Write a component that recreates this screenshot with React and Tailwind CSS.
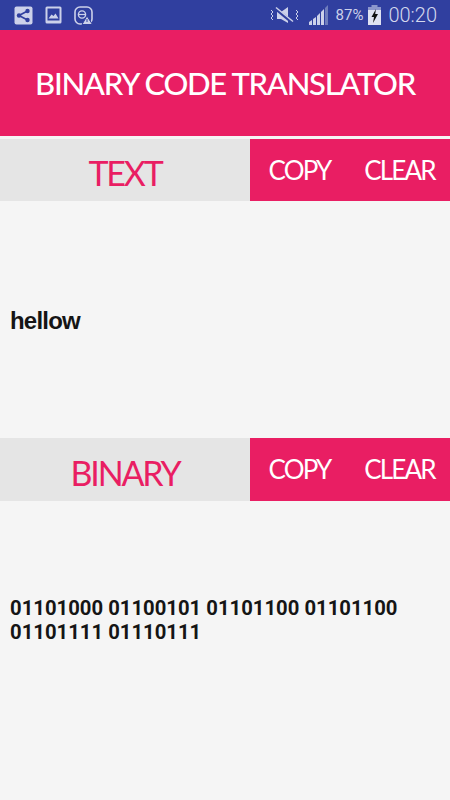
import React from 'react';

function ShareIcon() {
  return (
    <svg width="19" height="19" viewBox="0 0 19 19">
      <rect x="0.5" y="0.5" width="18" height="18" rx="2" fill="#ccd1ea" />
      <g stroke="#303f9f" strokeWidth="1.5">
        <line x1="5" y1="9.5" x2="13.5" y2="5" />
        <line x1="5" y1="9.5" x2="13.5" y2="14" />
      </g>
      <circle cx="5" cy="9.5" r="2.2" fill="#303f9f" />
      <circle cx="13.5" cy="5" r="2.2" fill="#303f9f" />
      <circle cx="13.5" cy="14" r="2.2" fill="#303f9f" />
    </svg>
  );
}

function ImageIcon() {
  return (
    <svg width="17" height="18" viewBox="0 0 17 18">
      <rect x="0.5" y="0.5" width="16" height="17" rx="1.5" fill="#ccd1ea" />
      <rect x="2.5" y="2.5" width="12" height="12" fill="#303f9f" />
      <path d="M3.5 12.5 L6.5 8.5 L8.5 10 L10.5 7.5 L13.5 12.5 Z" fill="#ccd1ea" />
    </svg>
  );
}

function BrowserAlertIcon() {
  return (
    <svg width="19" height="19" viewBox="0 0 19 19">
      <rect x="1" y="1" width="17" height="17" rx="5" fill="none" stroke="#ccd1ea" strokeWidth="1.6" />
      <circle cx="8" cy="8.5" r="3.6" fill="none" stroke="#ccd1ea" strokeWidth="1.4" />
      <line x1="5" y1="8.5" x2="11" y2="8.5" stroke="#ccd1ea" strokeWidth="1.2" />
      <path d="M13 10 L18.5 18.5 L8 18.5 Z" fill="#ccd1ea" stroke="#303f9f" strokeWidth="1" />
      <line x1="13" y1="13" x2="13" y2="16" stroke="#303f9f" strokeWidth="1" />
    </svg>
  );
}

function MuteVibrateIcon() {
  return (
    <svg width="29" height="19" viewBox="0 0 29 19">
      <path d="M1 4 L3 6 L1 8 L3 10 L1 12 L3 14" fill="none" stroke="#ccd1ea" strokeWidth="1" />
      <path d="M26 4 L28 6 L26 8 L28 10 L26 12 L28 14" fill="none" stroke="#ccd1ea" strokeWidth="1" />
      <path d="M7 6 L11 6 L18 1 L18 17 L11 13 L7 13 Z" fill="#ccd1ea" />
      <line x1="6" y1="3" x2="23" y2="17" stroke="#303f9f" strokeWidth="3" />
      <line x1="6" y1="1.5" x2="23" y2="15.5" stroke="#ccd1ea" strokeWidth="1.5" />
    </svg>
  );
}

function SignalIcon() {
  return (
    <svg width="20" height="20" viewBox="0 0 20 20">
      <path d="M0 20 L0 17 L3 15 L3 20 Z" fill="#ccd1ea" />
      <path d="M4 20 L4 14 L7 12 L7 20 Z" fill="#ccd1ea" />
      <path d="M8 20 L8 11 L11 8 L11 20 Z" fill="#ccd1ea" />
      <path d="M12 20 L12 7 L15 4 L15 20 Z" fill="#ccd1ea" />
      <path d="M16 20 L16 3 L19 0 L19 20 Z" fill="#6f7dbd" />
    </svg>
  );
}

function BatteryIcon() {
  return (
    <svg width="13" height="20" viewBox="0 0 13 20">
      <rect x="3.5" y="0" width="6" height="3" fill="#8d97cc" />
      <rect x="0" y="2" width="13" height="4" fill="#8d97cc" />
      <rect x="0" y="5" width="13" height="15" fill="#dfe2f2" />
      <path d="M8 4 L3.5 12 L6 12 L5 18 L10 9 L7.2 9 Z" fill="#111" />
    </svg>
  );
}

function SectionBar({ title, tall }) {
  return (
    <div className={tall ? 'flex h-[63px] bg-[#e5e5e5]' : 'flex h-[62px] bg-[#e5e5e5]'}>
      <div className="w-[250px] flex items-center justify-center pt-[5px] text-[#e91e63] text-[34px] tracking-[-2.2px]">
        {title}
      </div>
      <div className="flex-1 flex items-center bg-[#e91e63] text-white text-[26px] tracking-[-1.8px]">
        <div className="w-[99px] text-center">COPY</div>
        <div className="flex-1 text-center">CLEAR</div>
      </div>
    </div>
  );
}

export default function App() {
  return (
    <div className="w-[450px] h-[800px] overflow-hidden flex flex-col bg-[#f5f5f5] font-['Lato',sans-serif]">
      <div className="h-[30px] bg-[#303f9f] flex items-center pl-[14px] pr-[13px] text-[#ccd1ea]">
        <div className="flex items-center gap-[12px]">
          <ShareIcon />
          <ImageIcon />
          <BrowserAlertIcon />
        </div>
        <div className="ml-auto flex items-center font-['Roboto',sans-serif]">
          <MuteVibrateIcon />
          <div className="ml-[10px]"><SignalIcon /></div>
          <span className="ml-[7px] text-[15px]">87%</span>
          <div className="ml-[5px]"><BatteryIcon /></div>
          <span className="ml-[7px] text-[20px] font-light text-[#d5d9ee]">00:20</span>
        </div>
      </div>

      <div className="h-[106px] bg-[#e91e63] flex items-center justify-center text-white text-[31px] tracking-[-1.3px] font-medium">
        BINARY CODE TRANSLATOR
      </div>
      <div className="h-[3px] shrink-0 bg-[#f5f5f5]"></div>

      <SectionBar title="TEXT" />
      <div className="h-[237px] flex items-center pl-[10px] pt-[2px] font-['Liberation_Sans',sans-serif] font-bold text-[24px] tracking-[-0.8px] text-[#151515]">
        hellow
      </div>

      <SectionBar title="BINARY" tall />
      <div className="flex-1 flex px-[10px] pt-[95px] font-['Roboto',sans-serif] font-bold text-[20.3px] leading-[24px] text-[#151515]">
        <div>01101000 01100101 01101100 01101100 01101111 01110111</div>
      </div>
    </div>
  );
}
